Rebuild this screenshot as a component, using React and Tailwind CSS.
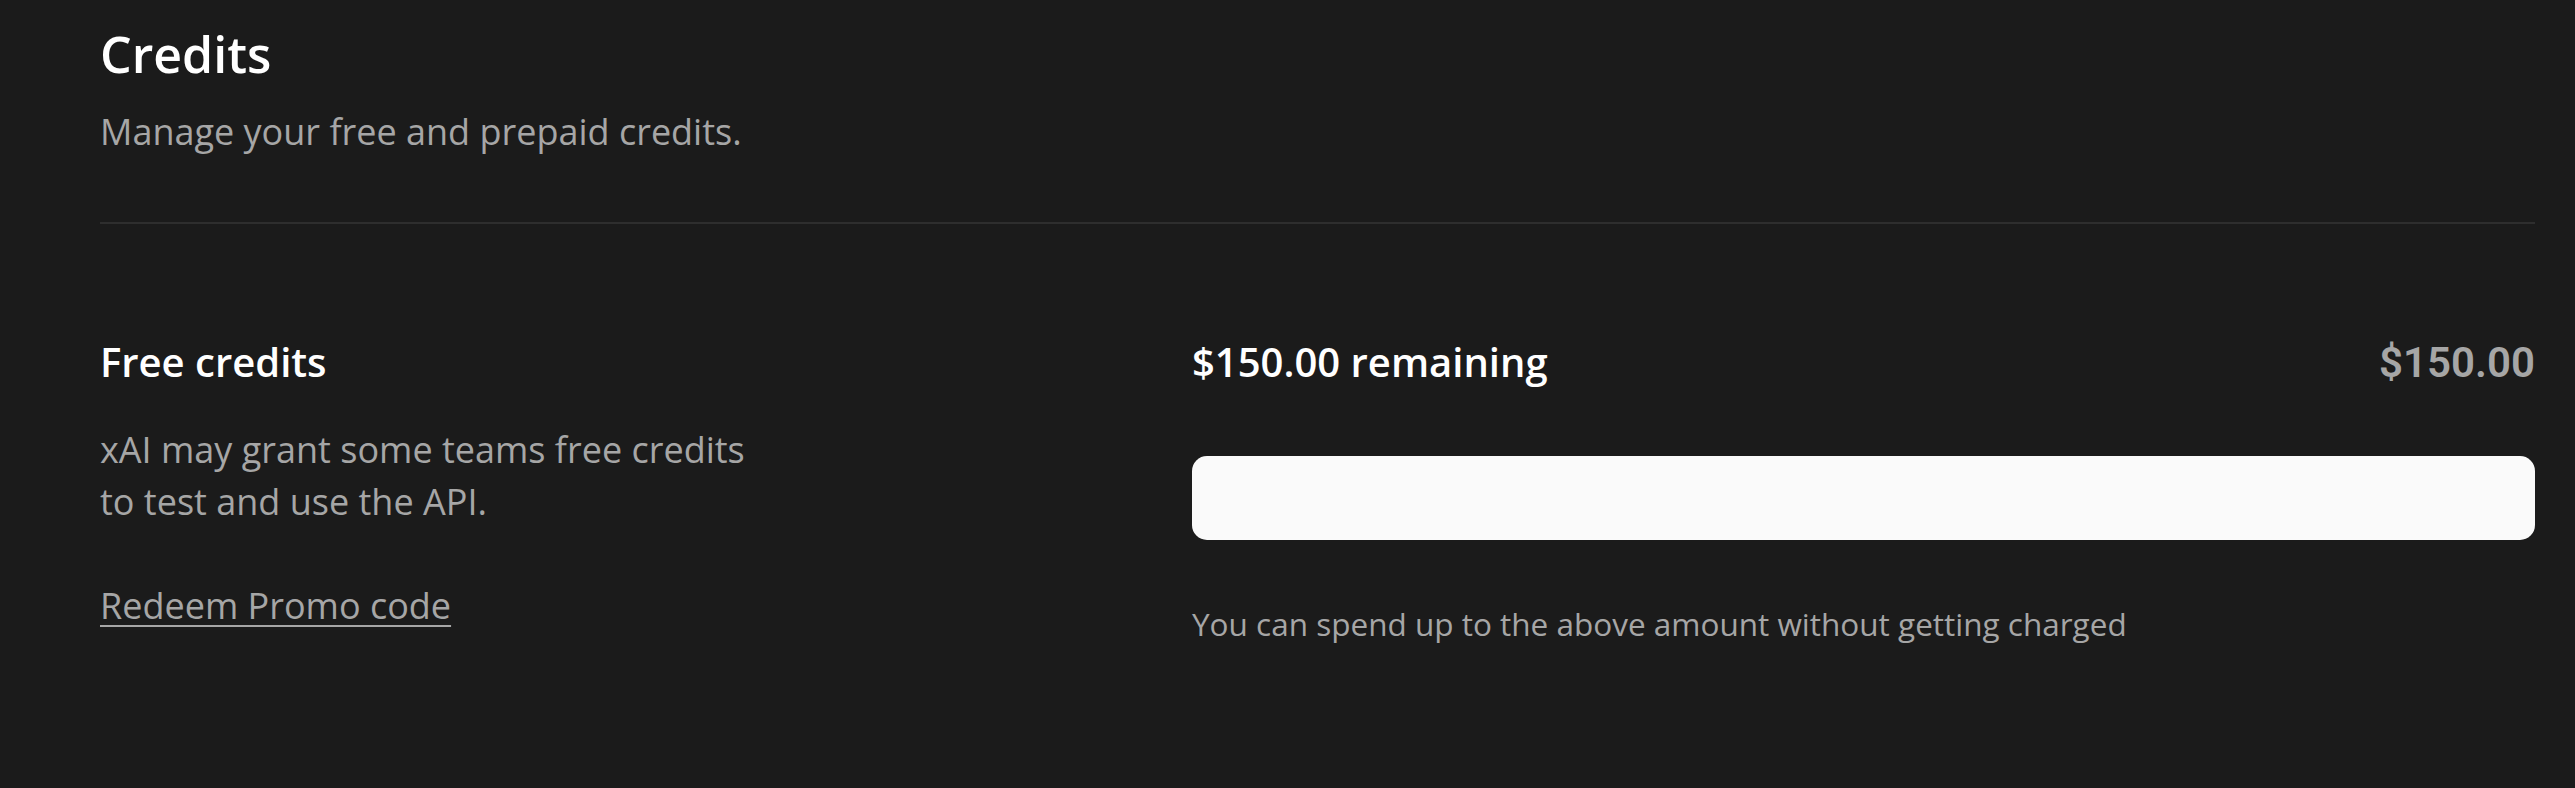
import React from 'react';

const App = () => {
  return (
    <div className="min-h-screen w-full bg-[#1b1b1b] text-white font-['Open_Sans',_'Noto_Sans',_sans-serif]">
      <main className="pl-[100px] pr-[40px] pt-[26px]">
        {/* Header */}
        <header>
          <h1 className="text-[50px] leading-[56px] font-semibold text-white">Credits</h1>
          <p className="mt-[28px] text-[36px] leading-[44px] text-[#a6a6a6]">
            Manage your free and prepaid credits.
          </p>
        </header>

        <div className="mt-[68px] h-[2px] bg-[#2e2e2e]" />

        {/* Free credits */}
        <section className="mt-[114px] flex">
          <div className="w-[1092px] shrink-0">
            <h2 className="text-[40px] leading-[48px] font-semibold text-white">Free credits</h2>
            <p className="mt-[38px] max-w-[680px] text-[36px] leading-[52px] text-[#a6a6a6]">
              xAI may grant some teams free credits to test and use the API.
            </p>
            <a href="#" className="mt-[56px] block w-fit text-[36px] leading-[44px] text-[#a6a6a6] underline underline-offset-[6px] decoration-2">
              Redeem Promo code
            </a>
          </div>

          <div className="flex-1">
            <div className="flex items-baseline justify-between">
              <span className="text-[40px] leading-[48px] font-semibold text-white">$150.00 remaining</span>
              <span className="font-['Roboto',_sans-serif] text-[42px] leading-[48px] font-semibold text-[#a6a6a6]">$150.00</span>
            </div>
            <div className="mt-[69px] h-[84px] rounded-[15px] bg-[#fafafa]" />
            <p className="mt-[64px] text-[31.5px] leading-[40px] text-[#a6a6a6]">
              You can spend up to the above amount without getting charged
            </p>
          </div>
        </section>
      </main>
    </div>
  );
};

export default App;
